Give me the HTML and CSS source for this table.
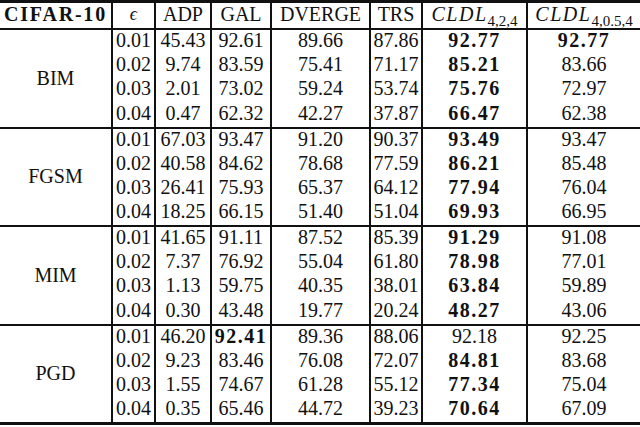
FILE: index.html
```html
<!DOCTYPE html>
<html lang="en">
  <head>
    <meta charset="UTF-8" />
    <meta name="viewport" content="width=device-width, initial-scale=1.0" />
    <title>CIFAR-10 results</title>
    <link rel="stylesheet" href="styles.css">
  </head>
  <body>
    <table class="results">
      <colgroup>
        <col class="c-set">
        <col class="c-eps">
        <col class="c-adp">
        <col class="c-gal">
        <col class="c-dverge">
        <col class="c-trs">
        <col class="c-cldl">
        <col class="c-cldl2">
      </colgroup>
      <thead>
        <tr>
          <th class="dataset">CIFAR-10</th>
          <th><i class="eps">ϵ</i></th>
          <th>ADP</th>
          <th>GAL</th>
          <th>DVERGE</th>
          <th>TRS</th>
          <th class="cldl"><i>CLDL</i><sub>4,2,4</sub></th>
          <th class="cldl"><i>CLDL</i><sub>4,0.5,4</sub></th>
        </tr>
      </thead>
      <tbody>
        <tr><td class="attack" rowspan="4">BIM</td><td>0.01</td><td>45.43</td><td>92.61</td><td>89.66</td><td>87.86</td><td class="best">92.77</td><td class="best">92.77</td></tr>
        <tr><td>0.02</td><td>9.74</td><td>83.59</td><td>75.41</td><td>71.17</td><td class="best">85.21</td><td>83.66</td></tr>
        <tr><td>0.03</td><td>2.01</td><td>73.02</td><td>59.24</td><td>53.74</td><td class="best">75.76</td><td>72.97</td></tr>
        <tr><td>0.04</td><td>0.47</td><td>62.32</td><td>42.27</td><td>37.87</td><td class="best">66.47</td><td>62.38</td></tr>
      </tbody>
      <tbody>
        <tr><td class="attack" rowspan="4">FGSM</td><td>0.01</td><td>67.03</td><td>93.47</td><td>91.20</td><td>90.37</td><td class="best">93.49</td><td>93.47</td></tr>
        <tr><td>0.02</td><td>40.58</td><td>84.62</td><td>78.68</td><td>77.59</td><td class="best">86.21</td><td>85.48</td></tr>
        <tr><td>0.03</td><td>26.41</td><td>75.93</td><td>65.37</td><td>64.12</td><td class="best">77.94</td><td>76.04</td></tr>
        <tr><td>0.04</td><td>18.25</td><td>66.15</td><td>51.40</td><td>51.04</td><td class="best">69.93</td><td>66.95</td></tr>
      </tbody>
      <tbody>
        <tr><td class="attack" rowspan="4">MIM</td><td>0.01</td><td>41.65</td><td>91.11</td><td>87.52</td><td>85.39</td><td class="best">91.29</td><td>91.08</td></tr>
        <tr><td>0.02</td><td>7.37</td><td>76.92</td><td>55.04</td><td>61.80</td><td class="best">78.98</td><td>77.01</td></tr>
        <tr><td>0.03</td><td>1.13</td><td>59.75</td><td>40.35</td><td>38.01</td><td class="best">63.84</td><td>59.89</td></tr>
        <tr><td>0.04</td><td>0.30</td><td>43.48</td><td>19.77</td><td>20.24</td><td class="best">48.27</td><td>43.06</td></tr>
      </tbody>
      <tbody>
        <tr><td class="attack" rowspan="4">PGD</td><td>0.01</td><td>46.20</td><td class="best">92.41</td><td>89.36</td><td>88.06</td><td>92.18</td><td>92.25</td></tr>
        <tr><td>0.02</td><td>9.23</td><td>83.46</td><td>76.08</td><td>72.07</td><td class="best">84.81</td><td>83.68</td></tr>
        <tr><td>0.03</td><td>1.55</td><td>74.67</td><td>61.28</td><td>55.12</td><td class="best">77.34</td><td>75.04</td></tr>
        <tr><td>0.04</td><td>0.35</td><td>65.46</td><td>44.72</td><td>39.23</td><td class="best">70.64</td><td>67.09</td></tr>
      </tbody>
    </table>
  </body>
</html>
```

FILE: styles.css
```css
* {
  box-sizing: border-box;
  margin: 0;
  padding: 0;
}
body {
  background-color: white;
  color: #111;
  font-family: "Liberation Serif", "Times New Roman", serif;
  font-size: 20px;
}
.results {
  width: 640px;
  table-layout: fixed;
  border-collapse: collapse;
  border-top: 3px solid #111;
  border-bottom: 3px solid #111;
}
.c-set { width: 112px; }
.c-eps { width: 43px; }
.c-adp { width: 56px; }
.c-gal { width: 60px; }
.c-dverge { width: 99px; }
.c-trs { width: 52px; }
.c-cldl { width: 105px; }
.c-cldl2 { width: 113px; }
th,
td {
  height: 24.25px;
  padding: 0 1px 3px;
  line-height: 21px;
  text-align: center;
  font-weight: normal;
  white-space: nowrap;
  border-right: 2px solid #111;
}
th:last-child,
td:last-child {
  border-right: none;
}
thead th {
  height: 27px;
  border-bottom: 2px solid #111;
}
tbody {
  border-top: 2px solid #111;
}
.dataset {
  font-weight: bold;
  letter-spacing: 1.8px;
}
.eps {
  font-size: 18px;
}
.cldl i {
  letter-spacing: 1.5px;
}
.cldl sub {
  font-size: 15px;
  line-height: 0;
  vertical-align: -5px;
}
.attack {
  vertical-align: middle;
  padding: 0;
}
.best {
  font-weight: bold;
  letter-spacing: 1.5px;
}
```
